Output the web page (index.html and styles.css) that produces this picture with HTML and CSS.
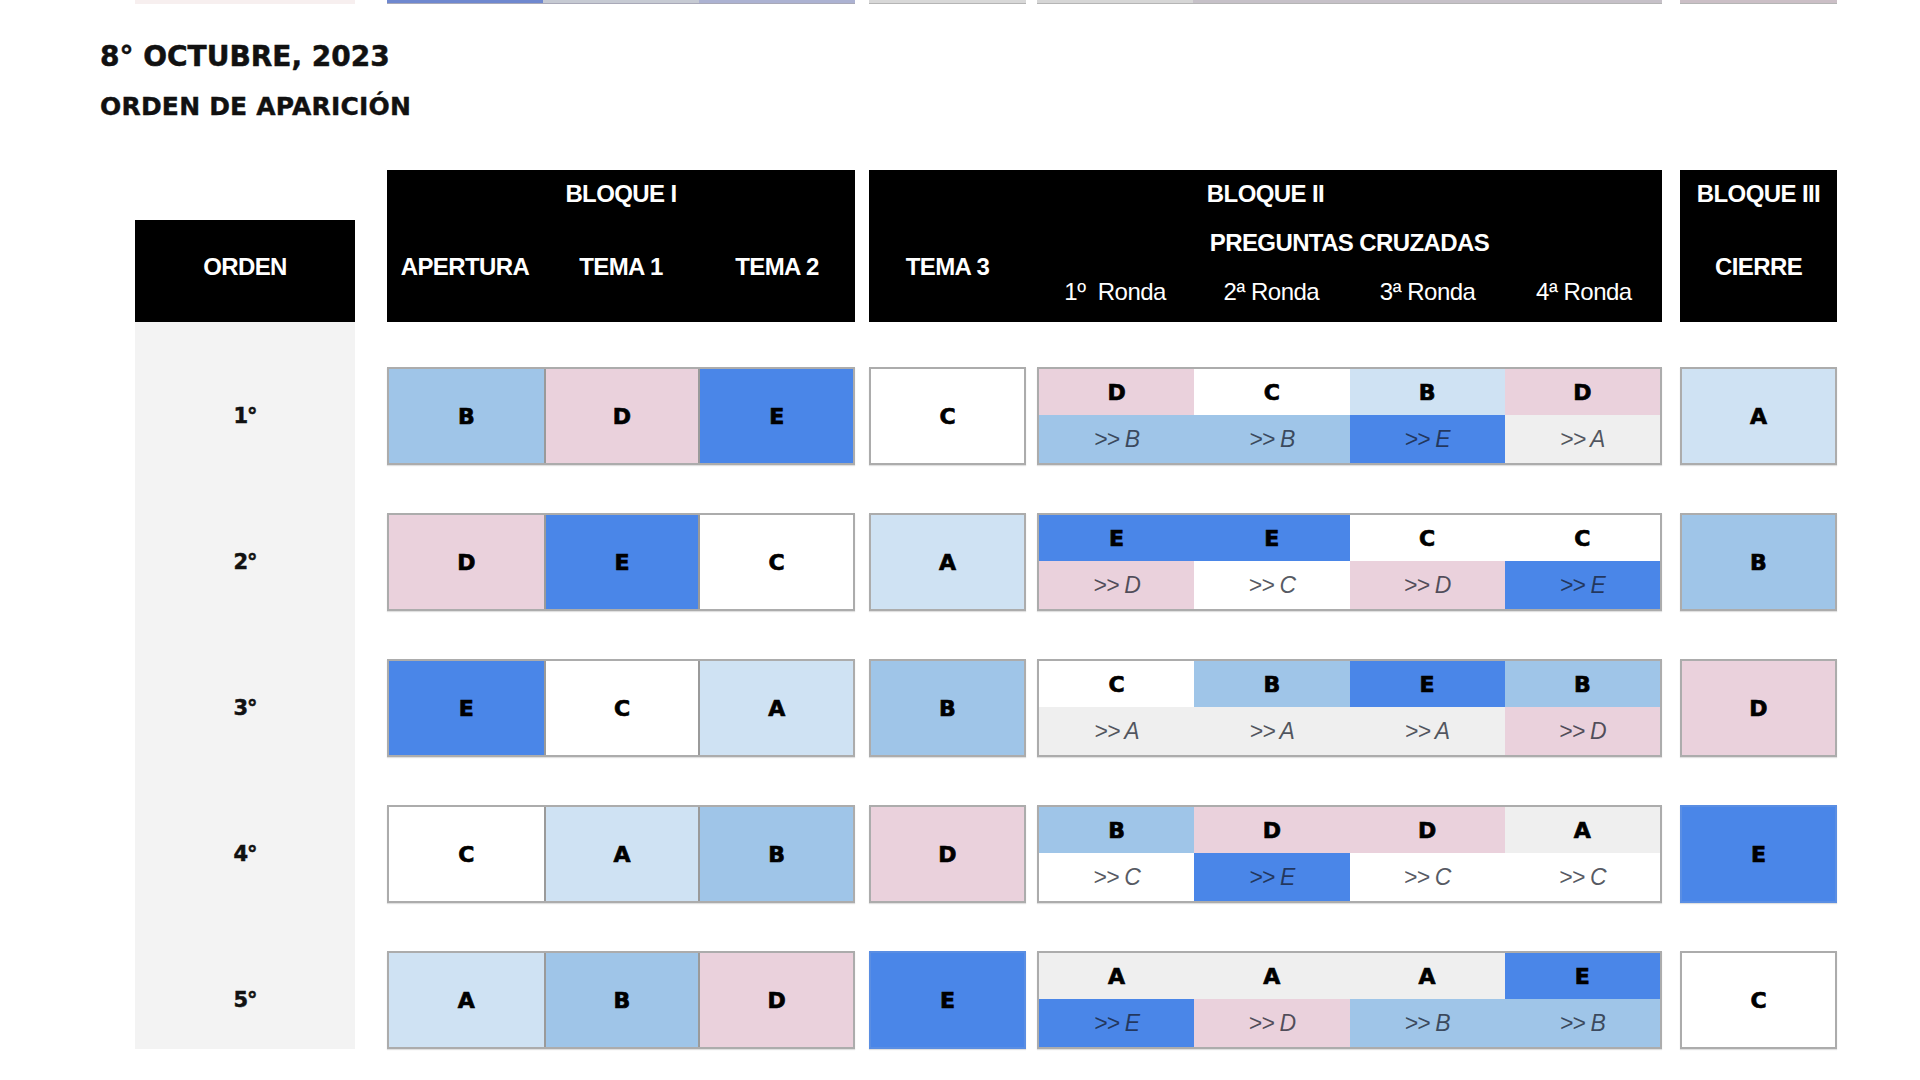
FILE: index.html
```html
<!DOCTYPE html>
<html lang="es">
<head>
<meta charset="utf-8">
<title>Orden de aparición</title>
<link rel="stylesheet" href="styles.css">
</head>
<body>
<div class="strip">
  <div class="s-orden"></div>
  <div class="s-b1"><span class="sc1"></span><span class="sc2"></span><span class="sc3"></span></div>
  <div class="s-t3"></div>
  <div class="s-cross"><span class="sc4"></span><span class="sc5"></span></div>
  <div class="s-cierre"></div>
</div>

<header class="titles">
  <h1 class="title">8° OCTUBRE, 2023</h1>
  <h2 class="subtitle">ORDEN DE APARICIÓN</h2>
</header>

<main class="board">
  <div class="h-orden">ORDEN</div>

  <div class="h-b1">
    <div class="h-top span3">BLOQUE I</div>
    <div class="h-lab">APERTURA</div>
    <div class="h-lab">TEMA 1</div>
    <div class="h-lab">TEMA 2</div>
  </div>

  <div class="h-b2">
    <div class="h-top b2-title">BLOQUE II</div>
    <div class="h-lab b2-tema3">TEMA 3</div>
    <div class="h-mid b2-preg">PREGUNTAS CRUZADAS</div>
    <div class="h-ronda c3">1º&nbsp; Ronda</div>
    <div class="h-ronda c4">2ª Ronda</div>
    <div class="h-ronda c5">3ª Ronda</div>
    <div class="h-ronda c6">4ª Ronda</div>
  </div>

  <div class="h-b3">
    <div class="h-top">BLOQUE III</div>
    <div class="h-lab">CIERRE</div>
  </div>

  <div class="orden-bg"></div>

  <!-- Row 1 -->
  <div class="lbl r1">1°</div>
  <div class="grp r1"><div class="cell cB">B</div><div class="cell cD">D</div><div class="cell cE">E</div></div>
  <div class="solo t3 r1 cC">C</div>
  <div class="cross r1">
    <div class="top cD">D</div><div class="top cC">C</div><div class="top cA">B</div><div class="top cD">D</div>
    <div class="bot cB">&gt;&gt; B</div><div class="bot cB">&gt;&gt; B</div><div class="bot cE">&gt;&gt; E</div><div class="bot cG">&gt;&gt; A</div>
  </div>
  <div class="solo ci r1 cA">A</div>

  <!-- Row 2 -->
  <div class="lbl r2">2°</div>
  <div class="grp r2"><div class="cell cD">D</div><div class="cell cE">E</div><div class="cell cC">C</div></div>
  <div class="solo t3 r2 cA">A</div>
  <div class="cross r2">
    <div class="top cE">E</div><div class="top cE">E</div><div class="top cC">C</div><div class="top cC">C</div>
    <div class="bot cD">&gt;&gt; D</div><div class="bot cC">&gt;&gt; C</div><div class="bot cD">&gt;&gt; D</div><div class="bot cE">&gt;&gt; E</div>
  </div>
  <div class="solo ci r2 cB">B</div>

  <!-- Row 3 -->
  <div class="lbl r3">3°</div>
  <div class="grp r3"><div class="cell cE">E</div><div class="cell cC">C</div><div class="cell cA">A</div></div>
  <div class="solo t3 r3 cB">B</div>
  <div class="cross r3">
    <div class="top cC">C</div><div class="top cB">B</div><div class="top cE">E</div><div class="top cB">B</div>
    <div class="bot cG">&gt;&gt; A</div><div class="bot cG">&gt;&gt; A</div><div class="bot cG">&gt;&gt; A</div><div class="bot cD">&gt;&gt; D</div>
  </div>
  <div class="solo ci r3 cD">D</div>

  <!-- Row 4 -->
  <div class="lbl r4">4°</div>
  <div class="grp r4"><div class="cell cC">C</div><div class="cell cA">A</div><div class="cell cB">B</div></div>
  <div class="solo t3 r4 cD">D</div>
  <div class="cross r4">
    <div class="top cB">B</div><div class="top cD">D</div><div class="top cD">D</div><div class="top cG">A</div>
    <div class="bot cC">&gt;&gt; C</div><div class="bot cE">&gt;&gt; E</div><div class="bot cC">&gt;&gt; C</div><div class="bot cC">&gt;&gt; C</div>
  </div>
  <div class="solo ci r4 cE">E</div>

  <!-- Row 5 -->
  <div class="lbl r5">5°</div>
  <div class="grp r5"><div class="cell cA">A</div><div class="cell cB">B</div><div class="cell cD">D</div></div>
  <div class="solo t3 r5 cE">E</div>
  <div class="cross r5">
    <div class="top cG">A</div><div class="top cG">A</div><div class="top cG">A</div><div class="top cE">E</div>
    <div class="bot cE">&gt;&gt; E</div><div class="bot cD">&gt;&gt; D</div><div class="bot cB">&gt;&gt; B</div><div class="bot cB">&gt;&gt; B</div>
  </div>
  <div class="solo ci r5 cC">C</div>
</main>
</body>
</html>
```

FILE: styles.css
```css
html, body {
  margin: 0;
  padding: 0;
  background: #ffffff;
}

body {
  width: 1920px;
  height: 1080px;
  overflow: hidden;
  font-family: "Liberation Sans", Arial, sans-serif;
  color: #000;
}

/* remains of the previous table at the very top */
.strip {
  display: grid;
  grid-template-columns: 220px 32px 468px 14px 157px 11px 625px 18px 157px;
  margin-left: 135px;
  height: 4px;
}
.s-orden { grid-column: 1; background: #f7efef; }
.s-b1 { grid-column: 3; display: grid; grid-template-columns: 1fr 1fr 1fr; border-bottom: 1px solid #a9a9b8; }
.s-t3 { grid-column: 5; background: #d8d8d8; border-bottom: 1px solid #b5b5b5; }
.s-cross { grid-column: 7; display: grid; grid-template-columns: 156px 1fr; border-bottom: 1px solid #b5b5b5; }
.s-cierre { grid-column: 9; background: #cbbfc6; border-bottom: 1px solid #b5b5b5; }
.sc1 { background: #6f88cf; }
.sc2 { background: #c6cad3; }
.sc3 { background: #acb2d2; }
.sc4 { background: #d6d6d6; }
.sc5 { background: #c6c1c8; }

/* titles */
.titles {
  padding: 36px 0 0 100px;
}
.title {
  margin: 0;
  font-family: "DejaVu Sans", sans-serif;
  font-weight: bold;
  font-size: 28px;
  line-height: 34px;
  letter-spacing: 0;
  color: #111;
  -webkit-text-stroke: 0.5px #111;
}
.subtitle {
  margin: 18px 0 0;
  font-family: "DejaVu Sans", sans-serif;
  font-weight: bold;
  font-size: 25px;
  line-height: 30px;
  letter-spacing: 0.2px;
  color: #111;
  -webkit-text-stroke: 0.4px #111;
}

/* board */
.board {
  display: grid;
  grid-template-columns: 220px 32px 468px 14px 157px 11px 625px 18px 157px;
  grid-template-rows: 152px 45px 98px repeat(4, 48px 98px);
  margin: 48px 0 0 135px;
}

/* header */
.h-orden, .h-b1, .h-b2, .h-b3 {
  background: #000;
  color: #fff;
  font-weight: bold;
  font-size: 24px;
  letter-spacing: -0.6px;
}
.h-orden {
  grid-column: 1;
  grid-row: 1;
  align-self: end;
  height: 102px;
  display: flex;
  align-items: center;
  justify-content: center;
  padding-bottom: 8px;
  box-sizing: border-box;
}
.h-b1 {
  grid-column: 3;
  grid-row: 1;
  display: grid;
  grid-template-columns: 1fr 1fr 1fr;
  grid-template-rows: 48px 98px;
}
.h-b2 {
  grid-column: 5 / 8;
  grid-row: 1;
  display: grid;
  grid-template-columns: 157px 11px repeat(4, 1fr);
  grid-template-rows: 48px 50px 48px;
}
.h-b3 {
  grid-column: 9;
  grid-row: 1;
  display: grid;
  grid-template-rows: 48px 98px;
}
.h-top, .h-lab, .h-mid, .h-ronda {
  display: flex;
  align-items: center;
  justify-content: center;
  white-space: nowrap;
}
.span3 { grid-column: 1 / 4; }
.b2-title { grid-column: 1 / 7; grid-row: 1; }
.b2-tema3 { grid-column: 1; grid-row: 2 / 4; }
.b2-preg { grid-column: 3 / 7; grid-row: 2; }
.h-ronda { grid-row: 3; font-weight: normal; letter-spacing: -0.5px; }
.c3 { grid-column: 3; }
.c4 { grid-column: 4; }
.c5 { grid-column: 5; }
.c6 { grid-column: 6; }

/* order column */
.orden-bg {
  grid-column: 1;
  grid-row: 2 / 12;
  background: #f3f3f3;
}
.lbl {
  grid-column: 1;
  display: flex;
  align-items: center;
  justify-content: center;
  font-family: "DejaVu Sans", sans-serif;
  font-weight: bold;
  font-size: 21px;
  letter-spacing: -1px;
  color: #111;
  -webkit-text-stroke: 0.5px #111;
}

.r1 { grid-row: 3; }
.r2 { grid-row: 5; }
.r3 { grid-row: 7; }
.r4 { grid-row: 9; }
.r5 { grid-row: 11; }

/* letter colours */
.cA { background: #cfe2f3; }
.cB { background: #9fc5e8; }
.cC { background: #ffffff; }
.cD { background: #ead1dc; }
.cE { background: #4a86e8; }
.cG { background: #efefef; }

.grp, .solo, .cross {
  box-sizing: border-box;
  border: 2px solid #acacac;
  box-shadow: 0 1px 1px rgba(0, 0, 0, 0.12);
  font-family: "DejaVu Sans", sans-serif;
  font-weight: bold;
  font-size: 22px;
  color: #000;
}
.grp, .solo, .top {
  -webkit-text-stroke: 0.7px #000;
}
.grp {
  grid-column: 3;
  display: grid;
  grid-template-columns: 1fr 1fr 1fr;
}
.cell, .solo, .top, .bot {
  display: flex;
  align-items: center;
  justify-content: center;
}
.cell + .cell { border-left: 2px solid #9a9a9a; }

.t3 { grid-column: 5; }
.ci { grid-column: 9; }
.solo.cE { border-color: #5a8ee3; }

.cross {
  grid-column: 7;
  display: grid;
  grid-template-columns: repeat(4, 1fr);
  grid-template-rows: 46px 48px;
}
.bot {
  font-family: "Liberation Sans", Arial, sans-serif;
  font-style: italic;
  font-weight: normal;
  font-size: 23px;
  color: rgba(20, 25, 40, 0.72);
  letter-spacing: -0.8px;
  -webkit-text-stroke: 0;
}
```
